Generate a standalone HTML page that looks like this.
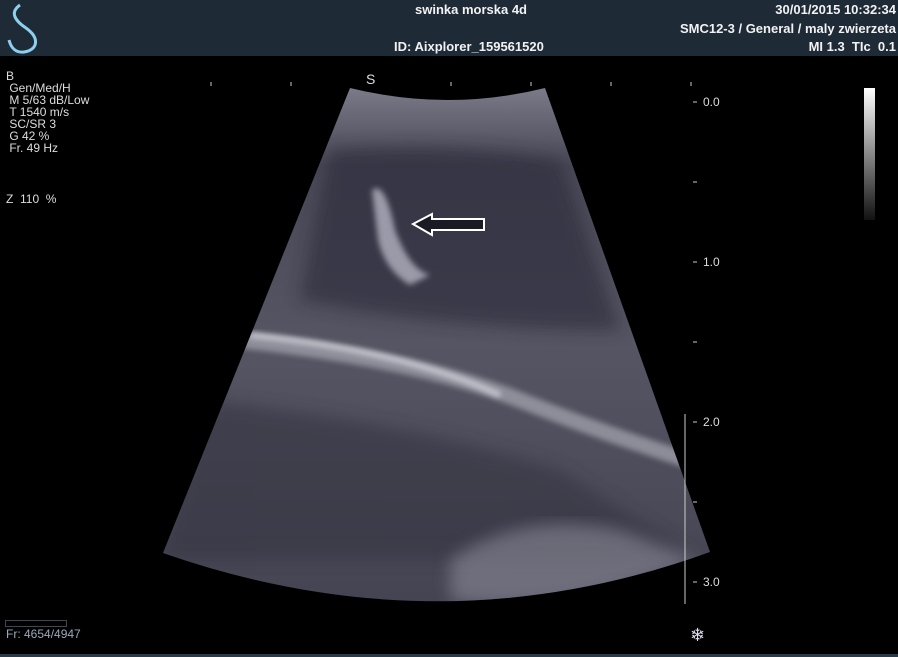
<!DOCTYPE html>
<html><head><meta charset="utf-8"><style>
body{margin:0;width:898px;height:657px;background:#000;overflow:hidden;position:relative;font-family:"Liberation Sans",sans-serif;color:#e8e8e8}
.hdr{position:absolute;left:0;top:0;width:898px;height:56px;background:#1e2a36}
.t{position:absolute;font-size:13px;font-weight:bold;color:#f2f2f2;white-space:nowrap}
.l{position:absolute;font-size:12px;color:#ddd;line-height:12px;white-space:nowrap}
</style></head><body>
<div class="hdr"></div>
<svg style="position:absolute;left:0;top:0" width="60" height="56"><path d="M20,5 C10,12 14,20 26,28 C40,38 38,50 24,52 C16,53 11,48 9,40" stroke="#8ccfee" stroke-width="3" fill="none"/></svg>
<div class="t" style="left:415px;top:2px">swinka morska 4d</div>
<div class="t" style="left:394px;top:39px">ID: Aixplorer_159561520</div>
<div class="t" style="right:2px;top:2px">30/01/2015 10:32:34</div>
<div class="t" style="right:2px;top:21px">SMC12-3 / General / maly zwierzeta</div>
<div class="t" style="right:2px;top:39px">MI 1.3&nbsp; TIc&nbsp; 0.1</div>
<div class="l" style="left:6px;top:70px">B<br>&nbsp;Gen/Med/H<br>&nbsp;M 5/63 dB/Low<br>&nbsp;T 1540 m/s<br>&nbsp;SC/SR 3<br>&nbsp;G 42 %<br>&nbsp;Fr. 49 Hz</div>
<div class="l" style="left:6px;top:193px">Z&nbsp; 110&nbsp; %</div>
<div class="l" style="left:6px;top:628px;color:#9ab">Fr: 4654/4947</div>
<div style="position:absolute;left:5px;top:620px;width:60px;height:5px;border:1px solid #445"></div>
<svg width="898" height="657" style="position:absolute;left:0;top:0">
<defs>
<linearGradient id="g" x1="0" y1="0" x2="0" y2="1"><stop offset="0" stop-color="#7a7a88"/><stop offset=".15" stop-color="#484856"/><stop offset=".5" stop-color="#555563"/><stop offset="1" stop-color="#444452"/></linearGradient>
<clipPath id="c"><path d="M350,88 Q448,112 545,88 L710,552 Q440,650 163,553 Z"/></clipPath>
<filter id="b"><feGaussianBlur stdDeviation="8"/></filter>
<filter id="b2"><feGaussianBlur stdDeviation="3"/></filter>
</defs>
<path d="M350,88 Q448,112 545,88 L710,552 Q440,650 163,553 Z" fill="url(#g)"/>
<g clip-path="url(#c)">
<path d="M330,150 Q450,140 560,160 L620,330 Q450,330 300,300 Z" fill="#2c2c3a" opacity=".6" filter="url(#b)"/>
<path d="M240,340 Q420,360 520,400 Q620,440 720,470" stroke="#a8a8b4" stroke-width="16" fill="none" opacity=".7" filter="url(#b2)"/>
<path d="M250,335 Q400,350 500,395" stroke="#d0d0d8" stroke-width="5" fill="none" filter="url(#b2)"/>
<path d="M200,400 Q400,420 560,470 L700,560 L160,560 Z" fill="#343442" opacity=".6" filter="url(#b)"/>
<path d="M450,560 Q520,510 620,530 L700,560 Q560,620 450,600 Z" fill="#8a8a98" opacity=".6" filter="url(#b)"/>
<path d="M372,190 Q385,180 395,230 Q410,270 430,275 L410,285 Q385,270 378,240 Z" fill="#9a9aa8" filter="url(#b2)"/>
</g>
<path d="M413,224 L432,214 L432,219 L484,219 L484,230 L432,230 L432,235 Z" fill="#1a1a24" stroke="#fff" stroke-width="2"/>
<g stroke="#ccc" stroke-width="1">
<line x1="211" y1="82" x2="211" y2="86"/><line x1="291" y1="82" x2="291" y2="86"/><line x1="451" y1="82" x2="451" y2="86"/><line x1="531" y1="82" x2="531" y2="86"/><line x1="611" y1="82" x2="611" y2="86"/><line x1="691" y1="82" x2="691" y2="86"/>
<line x1="693" y1="102" x2="697" y2="102"/><line x1="693" y1="182" x2="697" y2="182"/><line x1="693" y1="262" x2="697" y2="262"/><line x1="693" y1="342" x2="697" y2="342"/><line x1="693" y1="422" x2="697" y2="422"/><line x1="693" y1="502" x2="697" y2="502"/><line x1="693" y1="582" x2="697" y2="582"/>
<line x1="685" y1="414" x2="685" y2="604"/>
</g>
<text x="366" y="84" fill="#ddd" font-size="14" font-family="Liberation Sans">S</text>
<g fill="#ddd" font-size="12" font-family="Liberation Sans"><text x="703" y="106">0.0</text><text x="703" y="266">1.0</text><text x="703" y="426">2.0</text><text x="703" y="586">3.0</text></g>
<defs><linearGradient id="s" x1="0" y1="0" x2="0" y2="1"><stop offset="0" stop-color="#fff"/><stop offset="1" stop-color="#111"/></linearGradient></defs>
<rect x="864" y="88" width="11" height="132" fill="url(#s)"/>
<text x="690" y="641" fill="#dde" font-size="18">❄</text>
</svg>
<div style="position:absolute;left:0;top:654px;width:898px;height:3px;background:#2a3a48"></div>
</body></html>
